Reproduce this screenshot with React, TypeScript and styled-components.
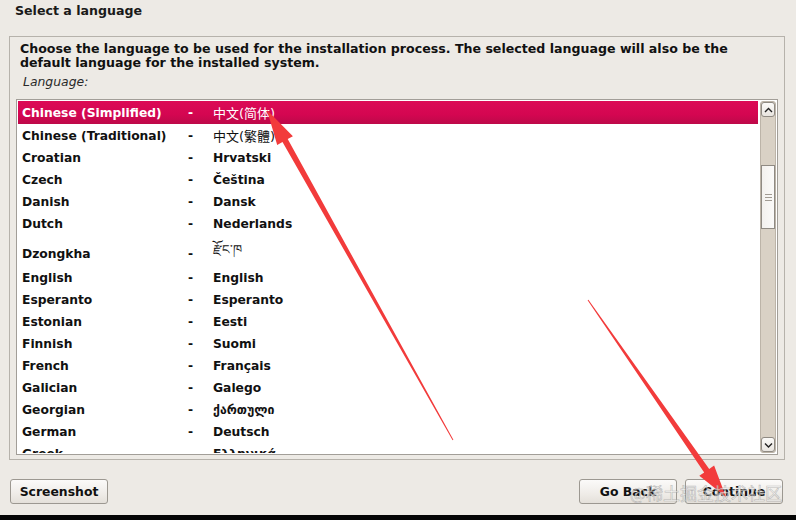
import React from 'react'
import styled, { createGlobalStyle } from 'styled-components'

const GlobalStyle = createGlobalStyle`
	html, body {
		margin: 0;
		padding: 0;
		background: #edeae5;
	}
	body {
		font-family: 'DejaVu Sans', 'Noto Sans CJK SC', sans-serif;
		color: #1a1a1a;
	}
`

const Screen = styled.div`
	position: relative;
	width: 796px;
	height: 520px;
	display: flex;
	flex-direction: column;
	overflow: hidden;
	background: #edeae5;
`

const Title = styled.div`
	height: 36px;
	box-sizing: border-box;
	padding: 3px 0 0 15px;
	font-size: 12.6px;
	font-weight: bold;
	line-height: 16px;
`

const Frame = styled.div`
	margin: 0 11px 0 9px;
	height: 424px;
	box-sizing: border-box;
	border: 1px solid #b6b2ab;
	display: flex;
	flex-direction: column;
	padding: 5px 6px 4px 6px;
`

const Prompt = styled.div`
	padding-left: 4px;
	font-size: 12.6px;
	font-weight: bold;
	line-height: 14px;
	color: #111;
	white-space: nowrap;
`

const FieldLabel = styled.div`
	padding: 5px 0 0 7px;
	height: 29px;
	box-sizing: border-box;
	font-size: 12.4px;
	font-style: italic;
	line-height: 14px;
	color: #2a2a2a;
`

const ListBox = styled.div`
	flex: 1;
	display: flex;
	gap: 2px;
	box-sizing: border-box;
	border: 1px solid #a29e98;
	background: #fff;
	padding: 1px;
	overflow: hidden;
`

const List = styled.div`
	flex: 1;
	overflow: hidden;
`

interface RowProps {
	selected?: boolean
	height: number
}

const Row = styled.div<RowProps>`
	display: grid;
	grid-template-columns: 166px 25px 1fr;
	align-items: center;
	height: ${(p) => p.height}px;
	padding-left: 4px;
	font-size: 12.3px;
	font-weight: bold;
	color: ${(p) => (p.selected ? '#fff' : '#111')};
	background: ${(p) => (p.selected ? 'linear-gradient(#dc0a56, #d40651 60%, #bd0949)' : 'transparent')};
`

interface NativeProps {
	cjk?: boolean
}

const Native = styled.span<NativeProps>`
	font-weight: ${(p) => (p.cjk ? 'normal' : 'bold')};
	font-size: ${(p) => (p.cjk ? '13px' : '12.3px')};
	font-family: ${(p) => (p.cjk ? "'DejaVu Sans', 'Noto Sans CJK SC', sans-serif" : 'inherit')};
`

const Scrollbar = styled.div`
	width: 16px;
	display: flex;
	flex-direction: column;
	background: #d9d1c5;
	border: 1px solid #bcb4a8;
	box-sizing: border-box;
	border-radius: 3px;
`

const ScrollButton = styled.div`
	height: 15px;
	display: flex;
	align-items: center;
	justify-content: center;
	background: linear-gradient(#fbfaf8, #e9e5e0);
	border: 1px solid #8f8a83;
	border-radius: 3px;
	box-sizing: border-box;
`

interface GapProps {
	size: number
}

const Trough = styled.div<GapProps>`
	height: ${(p) => p.size}px;
	flex: ${(p) => (p.size ? 'none' : '1')};
`

const Thumb = styled.div`
	height: 64px;
	display: flex;
	flex-direction: column;
	align-items: center;
	justify-content: center;
	gap: 2px;
	background: linear-gradient(90deg, #f3f1ee, #fbfaf9);
	border: 1px solid #8f8a83;
	box-sizing: border-box;
`

const Grip = styled.div`
	width: 7px;
	height: 1px;
	background: #a19b93;
`

const ButtonBar = styled.div`
	display: flex;
	align-items: flex-start;
	gap: 8px;
	padding: 19px 13px 0 10px;
	height: 55px;
	box-sizing: border-box;
`

const Spacer = styled.div`
	flex: 1;
`

const Button = styled.div`
	width: 98px;
	height: 25px;
	box-sizing: border-box;
	border: 1px solid #9c9891;
	border-radius: 3px;
	background: linear-gradient(#fbfaf9, #efece8 60%, #e4e0da);
	display: flex;
	align-items: center;
	justify-content: center;
	font-size: 12.4px;
	font-weight: bold;
	color: #111;
`

const BottomStrip = styled.div`
	flex: 1;
	background: #050505;
`

const Overlay = styled.svg`
	position: absolute;
	left: 0;
	top: 0;
	pointer-events: none;
`

const Watermark = styled.div`
	position: absolute;
	left: 630px;
	top: 482px;
	font-family: 'Noto Sans CJK SC', sans-serif;
	font-size: 17px;
	line-height: 22px;
	color: rgba(250, 250, 250, 0.6);
	-webkit-text-stroke: 0.6px rgba(130, 130, 130, 0.5);
	pointer-events: none;
`

const languages = [
	{ name: 'Chinese (Simplified)', native: '中文(简体)', cjk: true, h: 23 },
	{ name: 'Chinese (Traditional)', native: '中文(繁體)', cjk: true, h: 23 },
	{ name: 'Croatian', native: 'Hrvatski', h: 22 },
	{ name: 'Czech', native: 'Čeština', h: 22 },
	{ name: 'Danish', native: 'Dansk', h: 22 },
	{ name: 'Dutch', native: 'Nederlands', h: 22 },
	{ name: 'Dzongkha', native: 'རྫོང་ཁ', cjk: true, h: 32 },
	{ name: 'English', native: 'English', h: 22 },
	{ name: 'Esperanto', native: 'Esperanto', h: 22 },
	{ name: 'Estonian', native: 'Eesti', h: 22 },
	{ name: 'Finnish', native: 'Suomi', h: 22 },
	{ name: 'French', native: 'Français', h: 22 },
	{ name: 'Galician', native: 'Galego', h: 22 },
	{ name: 'Georgian', native: 'ქართული', h: 22 },
	{ name: 'German', native: 'Deutsch', h: 22 },
	{ name: 'Greek', native: 'Ελληνικά', h: 22 }
]

const Arrow: React.FC<{ points: string }> = ({ points }) => <polygon points={points} fill="#f23b3b" />

const App: React.FC = () => {
	return (
		<>
			<GlobalStyle />
			<Screen>
				<Title>Select a language</Title>
				<Frame>
					<Prompt>
						Choose the language to be used for the installation process. The selected language will also be the
						<br />
						default language for the installed system.
					</Prompt>
					<FieldLabel>Language:</FieldLabel>
					<ListBox>
						<List>
							{languages.map((lang, index) => (
								<Row key={lang.name} selected={index === 0} height={lang.h}>
									<span>{lang.name}</span>
									<span>-</span>
									<Native cjk={lang.cjk}>{lang.native}</Native>
								</Row>
							))}
						</List>
						<Scrollbar>
							<ScrollButton>
								<svg width="9" height="6" viewBox="0 0 9 6">
									<path d="M1 5 L4.5 1.5 L8 5" stroke="#222" strokeWidth="1.4" fill="none" />
								</svg>
							</ScrollButton>
							<Trough size={48} />
							<Thumb>
								<Grip />
								<Grip />
								<Grip />
							</Thumb>
							<Trough size={0} />
							<ScrollButton>
								<svg width="9" height="6" viewBox="0 0 9 6">
									<path d="M1 1.5 L4.5 5 L8 1.5" stroke="#222" strokeWidth="1.4" fill="none" />
								</svg>
							</ScrollButton>
						</Scrollbar>
					</ListBox>
				</Frame>
				<ButtonBar>
					<Button>Screenshot</Button>
					<Spacer />
					<Button>Go Back</Button>
					<Button>Continue</Button>
				</ButtonBar>
				<BottomStrip />
				<Overlay width="796" height="520" viewBox="0 0 796 520">
					<Arrow points="453.4,439.8 287.7,139.1 292.9,136.2 267,110 277.2,145 282.5,142.1 452.6,440.2" />
					<Arrow points="588.4,299.7 709.2,469 714.1,465.6 726,497 699.3,475.8 704.2,472.4 587.6,300.3" />
				</Overlay>
				<Watermark>@稀土掘金技术社区</Watermark>
			</Screen>
		</>
	)
}

export default App
